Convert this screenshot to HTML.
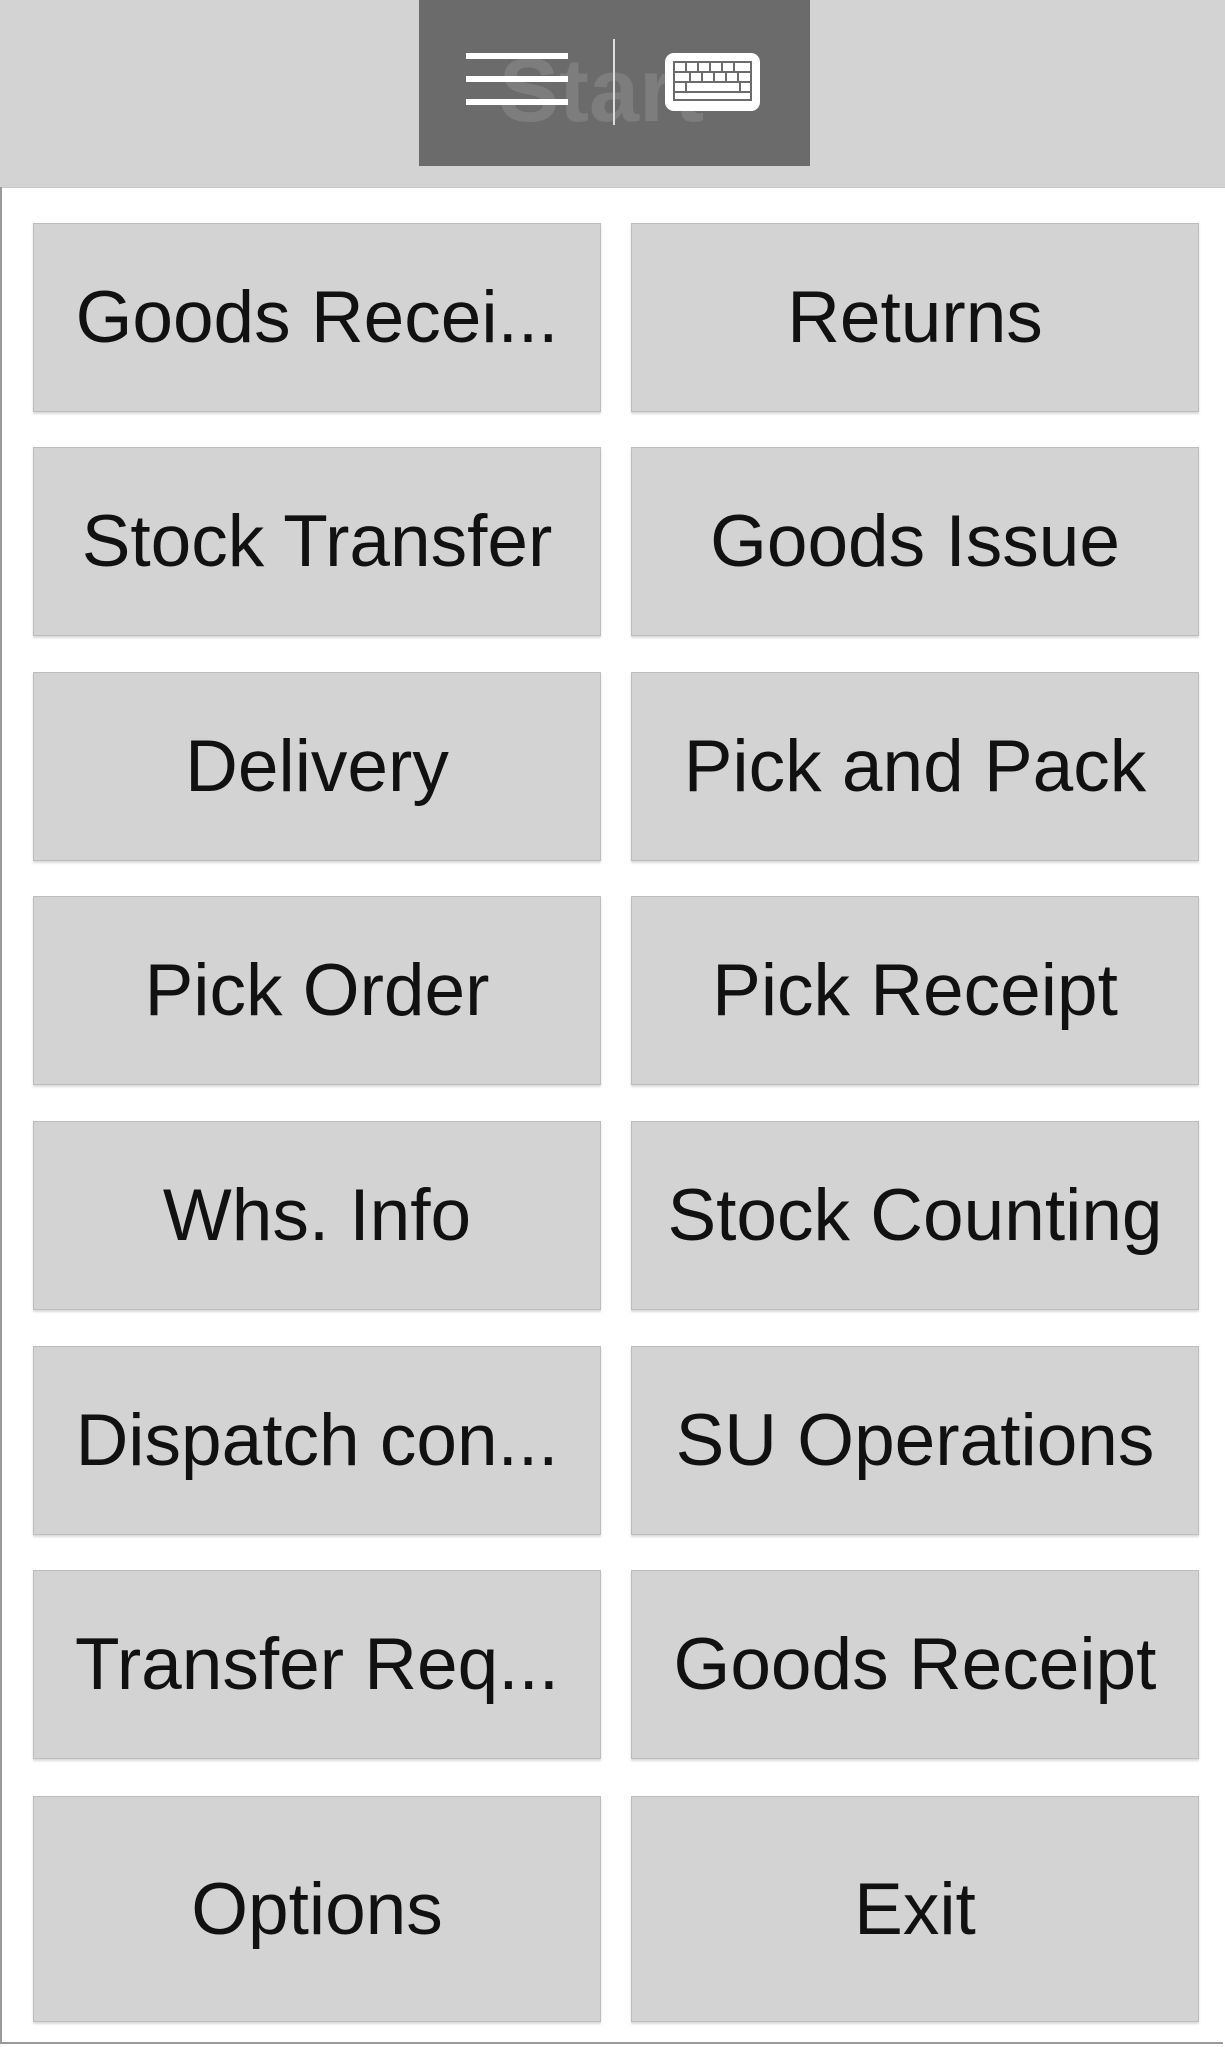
<!DOCTYPE html>
<html><head><style>
html,body{margin:0;padding:0;width:1225px;height:2047px;background:#fff;overflow:hidden}
body{position:relative;font-family:"Liberation Sans",sans-serif}
.hdr{position:absolute;left:0;top:0;width:1225px;height:187px;background:#d3d3d3;border-bottom:1px solid #c8c8c8}
.dark{position:absolute;left:419px;top:0;width:391px;height:166px;background:#6b6b6b}
.frame{position:absolute;left:0;top:187px;width:1223px;height:1857px;border-left:2px solid #9a9a9a;border-bottom:2px solid #9a9a9a;box-sizing:border-box}
.b{position:absolute;width:568px;height:189px;background:#d3d3d3;border:1px solid #bdbdbd;box-sizing:border-box;box-shadow:0 2px 2px rgba(0,0,0,.15);display:flex;align-items:center;justify-content:center;font-size:73px;color:#111;white-space:nowrap}
.l{left:33px}.r{left:631px}
.tall{height:226px}
</style></head><body>
<div class="hdr"></div>
<div class="dark">
<div style="position:absolute;left:80px;top:40px;font-size:90px;font-weight:bold;color:#7d7d7d;">Start</div>
<svg width="391" height="166" style="position:absolute;left:0;top:0">
<rect x="47" y="53" width="102" height="6" fill="#fff"/>
<rect x="47" y="76" width="102" height="6" fill="#fff"/>
<rect x="47" y="99" width="102" height="6" fill="#fff"/>
<rect x="194" y="39" width="2" height="86" fill="#ddd"/>
<rect x="246" y="53" width="95" height="58" rx="9" fill="#fff"/>
<rect x="254" y="61" width="79" height="40" fill="#6b6b6b"/>
<g fill="#fff">
<rect x="256" y="63" width="10" height="8"/><rect x="268" y="63" width="10" height="8"/><rect x="280" y="63" width="10" height="8"/><rect x="292" y="63" width="10" height="8"/><rect x="304" y="63" width="10" height="8"/><rect x="316" y="63" width="15" height="8"/>
<rect x="256" y="73" width="14" height="8"/><rect x="272" y="73" width="10" height="8"/><rect x="284" y="73" width="10" height="8"/><rect x="296" y="73" width="10" height="8"/><rect x="308" y="73" width="10" height="8"/><rect x="320" y="73" width="11" height="8"/>
<rect x="256" y="83" width="10" height="8"/><rect x="268" y="83" width="52" height="8"/><rect x="322" y="83" width="9" height="8"/>
<rect x="256" y="93" width="75" height="6"/>
</g>
</svg>
</div>
<div class="frame"></div>
<div class="b l" style="top:223px">Goods Recei...</div><div class="b r" style="top:223px">Returns</div>
<div class="b l" style="top:447px">Stock Transfer</div><div class="b r" style="top:447px">Goods Issue</div>
<div class="b l" style="top:672px">Delivery</div><div class="b r" style="top:672px">Pick and Pack</div>
<div class="b l" style="top:896px">Pick Order</div><div class="b r" style="top:896px">Pick Receipt</div>
<div class="b l" style="top:1121px">Whs. Info</div><div class="b r" style="top:1121px">Stock Counting</div>
<div class="b l" style="top:1346px">Dispatch con...</div><div class="b r" style="top:1346px">SU Operations</div>
<div class="b l" style="top:1570px">Transfer Req...</div><div class="b r" style="top:1570px">Goods Receipt</div>
<div class="b l tall" style="top:1796px">Options</div><div class="b r tall" style="top:1796px">Exit</div>
</body></html>
